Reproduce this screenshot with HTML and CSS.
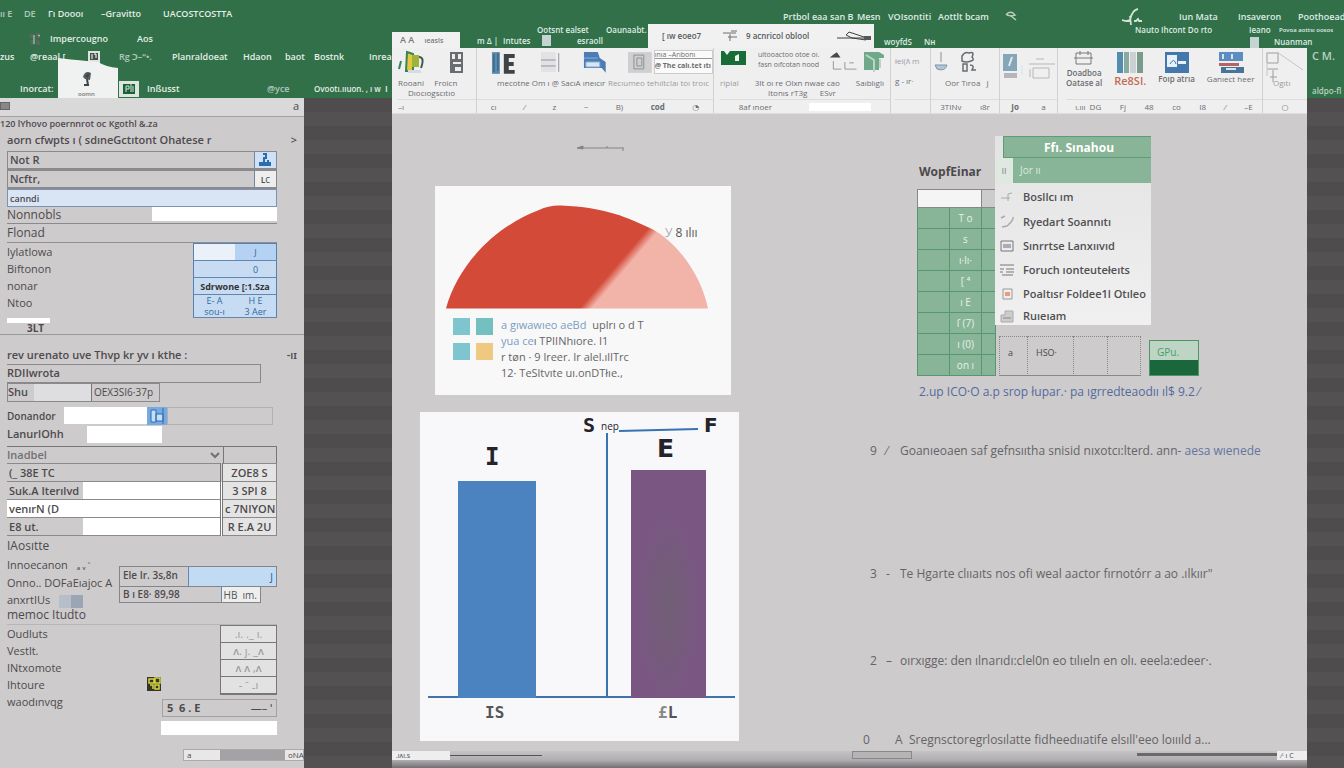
FILE: index.html
```html
<!DOCTYPE html>
<html lang="en">
<head>
<meta charset="utf-8">
<title>Workbook</title>
<link rel="stylesheet" href="styles.css">
</head>
<body>
<div class="app">
  <nav class="nav">
    <div class="row nav-a"><span class="dim">ıı E</span><span class="dim">DE</span><span>Γı Doooı</span><span>–Gravitto</span><span>UACOSTCOSTTA</span></div>
    <div class="row nav-b">
      <span></span>
      <svg class="i14" viewBox="0 0 14 14"><path d="M1 2h5v4H2zM8 1h4v5H8zM2 8h4v5H3zM8 7l4 2v4H8z" fill="#57695f"/><path d="M6 3v9M10 3l2 1" stroke="#c5d8cb"/></svg>
      <span>Impercougno</span><span>Aos</span>
    </div>
    <div class="row nav-c"><span>zus</span><span>@reaal [</span>
      <svg class="i14" viewBox="0 0 14 14"><path d="M1 1h12v12H1z" fill="#dfe3e0"/><path d="M3 3h8v7H3z" fill="#45544b"/><path d="M5 4v5M7 4h2v4" stroke="#fff" fill="none"/></svg>
      <span class="dim">Rg Ͻ–“•.</span><span>Planraldoeat</span><span>Hdaon</span><span>baot</span><span>Bostnk</span><span>Inrea</span></div>
    <div class="row nav-d"><span></span><span>Inorcat:</span>
      <button class="tab" type="button">
        <svg viewBox="0 0 60 40"><path d="M0 0q28 3 40 4q8 5 20 6v30H0z" fill="#f0f1f1"/><path d="M25 19q2-7 8-4l-1 7-5-1z" fill="#565b5e"/><path d="M29 21l1 6h-4M31 16l-3 3" stroke="#3d4347" stroke-width="2" fill="none"/></svg>
        <span>oomn</span>
      </button>
      <svg class="grid-icon" viewBox="0 0 20 16"><path d="M0 0h20v16H0z" fill="#dce6df"/><path d="M4 3h12v10H4z" fill="#176337"/><path d="M7 5v6M7 5h3v3H7M12 3v8M14 5v6" stroke="#dce6df" fill="none"/></svg>
      <span>Inßusst</span><span class="dim">@yce</span><span class="s8">Ovootı.ııuon. , ı w</span><span>I</span></div>
  </nav>

  <header class="top">
    <div class="row top-a"><span>Prtbol eaa san B</span><span>Mesn</span><span>VOIsontiti</span><span>Aottlt bcam</span>
      <svg class="i14" viewBox="0 0 14 14"><path d="M2 5q3-4 7-2l2 2-4 1-4-1M7 6l5 4" stroke="#b9d0c0" stroke-width="1.5" fill="none"/></svg>
      <svg class="stroke" viewBox="0 0 20 18"><path d="M0 12l4 1 4-1q2-10 8-11M8 8l1 9M12 13h2l2-2 1 2h3" stroke="#d2e2d7" stroke-width="1.8" fill="none"/></svg>
      <span>Iun Mata</span><span>Insaveron</span><span>Poothoead</span></div>
    <div class="top-low">
      <button class="tab-small" type="button">A A <small>ıeasls</small></button>
      <div class="mid">
        <div class="row mid-a"><span>Ootsnt ealset</span><span>Oaunaabt.</span></div>
        <div class="row mid-b"><span>m Δ |</span><span>Intutes</span><i class="chip"></i><span>esraoll</span></div>
      </div>
      <div class="search">
        <input type="text" value="[ ıw eoeo7" aria-label="Name">
        <svg class="i20" viewBox="0 0 20 16"><path d="M1 5h13M8 6v7M6 9h9M9 3h6" stroke="#6b6f70" fill="none"/></svg>
        <span>9 acnricol oblool</span>
        <svg viewBox="0 0 36 12"><path d="M1 8h30l-12-4-6-2-3 3 6 3 14 2" stroke="#3d4143" fill="none"/><path d="M28 6h7v4h-7z" fill="#54585a"/></svg>
      </div>
      <div class="right">
        <div class="row right-a"><span>Nauto Ihcont Do rto</span><span>Ieano</span><span class="s7">Povoa aottsı oosos</span></div>
        <div class="row right-b"><span>woyfdS</span><span>Nʜ</span><i class="chip"></i><span class="s8">Nuanman</span></div>
      </div>
    </div>
  </header>

  <aside class="side">
    <div class="side-bar"><i></i><span>a</span></div>
    <div class="crumb">120 lYhovo poernnrot oc Kgothl &amp;.za</div>
    <div class="side-body">
      <h2><span>aorn cfwpts ı ( sdıneGctıtont Ohatese r</span><span>&gt;</span></h2>
      <div class="field"><label for="f1">Not R</label><button type="button" class="cell-btn" aria-label="Pick"><svg viewBox="0 0 20 16"><path d="M8 2h3v4H9v5h6v2H5v-2h3M13 8v5" stroke="#2c6cae" stroke-width="2" fill="none"/></svg></button></div>
      <div class="field"><label for="f1">Ncftr,</label><button type="button" class="cell-btn pale">ʟc</button></div>
      <input id="f1" class="selected" type="text" value="canndi">
      <div class="line"><label for="f2">Nonnobls</label><input id="f2" type="text"></div>
      <div class="plain">Flonad</div>
      <div class="group">
        <ul><li>Iylatlowa</li><li>Biftonon</li><li>nonar</li><li>Ntoo</li></ul>
        <table class="mini">
          <tr><td class="lite"></td><td class="blue">J</td></tr>
          <tr><td></td><td>0</td></tr>
          <tr><td colspan="2" class="strong">Sdrwone [:1.Sza</td></tr>
          <tr><td>E- A<br>sou-ı</td><td>H E<br>3 Aer</td></tr>
        </table>
      </div>
      <div class="foot-a"><i></i><b>3LT</b></div>
    </div>
    <div class="side-body second">
      <h2><span>rev urenato uve Thvp kr yv ı kthe :</span><span>-ıɪ</span></h2>
      <div class="box260">RDIIwrota</div>
      <div class="shu"><label for="f3">Shu</label><input id="f3" type="text"><span>OEX3SI6·37p</span></div>
      <div class="don"><label for="f4">Donandor</label><input id="f4" type="text"><button type="button" aria-label="Pick"><svg viewBox="0 0 20 18"><path d="M0 0h20v18H0z" fill="#78aae0"/><path d="M4 3h5v12H4zM9 7h7v7H9zM16 1v16" fill="#c8def6" stroke="#286db9"/></svg></button><i></i></div>
      <div class="lan"><label for="f5">LanurlOhh</label><input id="f5" type="text"></div>
      <div class="ina"><label for="f6">Inadbel</label><select id="f6"><option></option></select><i></i></div>
      <table class="vals">
        <colgroup><col class="k"><col><col class="v"></colgroup>
        <tr><th colspan="2">(_ 38E TC</th><td>ZOE8 S</td></tr>
        <tr><th>Suk.A Iterılvd</th><td class="w"></td><td>3 SPI 8</td></tr>
        <tr><th class="w">venırN (D</th><td class="w"></td><td>c 7NIYON</td></tr>
        <tr><th>E8 ut.</th><td class="w"></td><td>R E.A 2U</td></tr>
      </table>
      <div class="plain tall">IAosıtte</div>
      <div class="split">
        <div class="names"><p>Innoecanon <small>ₐ ᵥ ˄</small></p><p class="wide">Onno.. DOFaEıajoc A</p><p>anxrtIUs <i></i></p></div>
        <div class="pairs">
          <div class="pair"><label for="f7">Ele Ir. 3s,8n</label><input id="f7" type="text" value="J"></div>
          <div class="pair b"><label for="f8">B ı E8· 89,98</label><input id="f8" type="text" value="HB  ım."></div>
        </div>
      </div>
      <div class="plain">memoc Itudto</div>
      <div class="group low">
        <ul><li>Oudluts</li><li>Vestlt.</li><li>INtxomote</li><li>Ihtoure</li><li>waodınvqg</li></ul>
        <svg class="i14 mark" viewBox="0 0 14 14"><path d="M0 0h14v14H0z" fill="#33352b"/><path d="M2 2h5v4H2zM8 1h5v5H8zM3 8h3v4M8 8h4v4H8z" stroke="#d5d442" stroke-width="1.5" fill="none"/></svg>
        <div class="stack">
          <div class="spark"><span>.ı. ._ ı.</span><span>ʌ. ȷ. _ʌ</span><span>ʌ ʌ ,ʌ</span><span>- ⁻ ₋ı</span></div>
        </div>
      </div>
      <div class="tools"><b>5 &nbsp;6 . E</b><span>—–  ˈ</span></div>
      <input class="last" type="text" aria-label="Note">
      <div class="hbar"><span>a</span><i></i><span>oNA</span></div>
    </div>
  </aside>

  <main class="main">
    <section class="ribbon">
      <div class="grp g1">
        <div class="icons">
          <svg viewBox="0 0 28 24"><path d="M9 2l6 2v17H8zM3 11l-2 8" fill="#e5c83b" stroke="#35845a" stroke-width="2"/><path d="M14 5h7v12h-7z" fill="#9fb23c"/><path d="M21 7q6 0 2 11" stroke="#405b50" stroke-width="2" fill="none"/><path d="M10 20h13v3H10z" fill="#d4dbe3"/></svg>
          <svg viewBox="0 0 28 24"><path d="M10 2h13v21H10z" fill="#696d70"/><path d="M12 4h3v5h-3zM18 4h3v5h-3zM13 12h8v2h-8zM15 17h6v4h-6z" fill="#eee"/></svg>
        </div>
        <p>Rooani &nbsp; &nbsp; Froicn</p><p>Dıocıogscıtıo</p>
        <div class="foot"><span>–ı</span></div>
      </div>
      <div class="grp g2">
        <div class="icons">
          <svg viewBox="0 0 28 24"><path d="M3 2h8v22H3z" fill="#5d89ad"/><path d="M5 4v18M9 3v18" stroke="#265c76"/><path d="M15 4h11v4h-6v4h5v4h-5v4h6v4H15z" fill="#404346"/></svg>
          <svg viewBox="0 0 28 24"><path d="M6 2h15v20H6z" fill="#e2e2e4"/><path d="M6 10h15M6 16h15M24 3v19" stroke="#92969f"/></svg>
          <svg viewBox="0 0 28 24"><path d="M4 2h14l2 6 6 4v11l-4-5H4z" fill="#4b7cb3"/><path d="M4 8h14M6 12h14v5H6z" fill="#d9e5f2" stroke="#8bb1da"/></svg>
          <svg viewBox="0 0 28 24"><path d="M2 2h24v21H2z" fill="#cfcfd1"/><path d="M8 5h10v14H8zM11 8h5v8h-5z" stroke="#8d9093" fill="none"/></svg>
          <div class="tip"><span>ınıa –Arıbonı</span><b>@ The calı.tet ıtı</b></div>
        </div>
        <p><span>mecotne Om ı @ SacıA ıneıcır</span><span class="dim2">Recıumeo tehıltclaı toı troıc</span></p>
        <div class="foot"><span>cı</span><span>⁄</span><span>z</span><span>~</span><span>B)</span><b>cod</b><span>◔</span></div>
      </div>
      <div class="grp g3">
        <div class="icons">
          <svg viewBox="0 0 28 24"><path d="M1 1h25v14H1z" fill="#176c38"/><path d="M15 11V6l4-2v7zM4 1l3 4 3-4" fill="#f0f2f1"/></svg>
          <div class="lines"><span>uitooactoo otoe oı.</span><span>fasn oıfcotan nood</span></div>
          <svg viewBox="0 0 36 24"><path d="M2 7q6-5 8-6l4 6z" fill="#454749"/><path d="M6 11v9h9M19 12v8h13M24 13h5" fill="none" stroke="#8b8e90"/></svg>
          <svg viewBox="0 0 28 24"><path d="M4 2h15l5 3v3h-5v12H4z" fill="#6fa98a"/><path d="M6 5l8 5v12M20 9v9" stroke="#b8d5c5" fill="none" stroke-width="2"/></svg>
        </div>
        <p><span class="dim2">ripial</span><span>3It oı re Olxn nwae cao</span><span>Saıblıglı</span></p>
        <p class="in">Itonıs rT3g &nbsp; &nbsp; &nbsp;ESvr</p>
        <div class="foot"><span>8af ınoer</span><i></i></div>
      </div>
      <div class="grp g4"><p class="dim2">łei(ʌ m</p><p>g - ır·</p><div class="foot"></div></div>
      <div class="grp g5">
        <div class="icons">
          <svg viewBox="0 0 20 24"><path d="M10 2v10M4 15h12q-2 7-10 4z" fill="#a9c8e1" stroke="#8a9197"/></svg>
          <svg viewBox="0 0 28 24"><path d="M7 6q3-5 7-3 6-2 3 4 3 3-1 4-5 2-9 0zM8 14h4v7H8zM15 15q5 0 2 5h4" stroke="#696d70" fill="none" stroke-width="1.5"/></svg>
        </div>
        <p>Oor Tıroa &nbsp; J</p>
        <div class="foot"><span>3TINv</span><span>ı8r</span></div>
      </div>
      <div class="grp g6">
        <div class="icons">
          <svg viewBox="0 0 28 30"><path d="M3 4h14v17H3z" fill="#84a6b7"/><path d="M4 23h13v5H4z" fill="#b5b6b9"/><path d="M12 7l-3 9M22 15v10" stroke="#e1ebef" stroke-width="2"/></svg>
          <svg viewBox="0 0 28 30"><path d="M1 14h26M5 18h16v10H5zM2 19v8M8 9h8" stroke="#b6b7ba" fill="none"/></svg>
        </div>
        <div class="foot"><b>Jo</b><span>a</span></div>
      </div>
      <div class="grp g7">
        <div class="cols">
          <div><svg viewBox="0 0 28 18"><path d="M6 3h15v11H6zM4 8h19M10 1v4M18 1v4" stroke="#777a7d" fill="none"/></svg><b>Doadboa</b><b>Oatase al</b></div>
          <div><svg viewBox="0 0 28 24"><path d="M1 2h6v21H1z" fill="#548bb0"/><path d="M8 2h5v21H8z" fill="#88aaa0"/><path d="M14 2h6v21h-6z" fill="#cbd0d3"/><path d="M21 2h6v21h-6z" fill="#789b8b"/></svg><b class="red">Re8SI.</b></div>
          <div><svg viewBox="0 0 28 24"><path d="M2 2h24v21H2z" fill="#4478ad"/><path d="M4 5h10v12H4zM15 11h8v3h-8z" fill="#e9f1f8"/><path d="M7 14q4-7 6 0" stroke="#4478ad" fill="none"/></svg><b>Foıp atrıa</b></div>
          <div><svg viewBox="0 0 28 24"><path d="M2 2h24v9H2z" fill="#5b8dc1"/><path d="M2 13h20v3H2z" fill="#b6645c"/><path d="M4 17h23v6H4z" fill="#4a739c"/><path d="M6 4v5M15 4v5M9 19h10" stroke="#d7e4f0" stroke-width="2"/></svg><span>Ganıect heer</span></div>
          <div><svg viewBox="0 0 14 34"><path d="M1 3h11v10H1zM1 19h11M7 20v12M4 27h7" stroke="#9a9da0" fill="none"/></svg></div>
        </div>
        <div class="foot"><span>ı.ııı &nbsp;DG</span><span>Fj</span><span>48</span><span>co</span><span>I8</span><span>⁄</span><span>–E</span></div>
      </div>
      <div class="grp g8"><svg viewBox="0 0 44 28"><path d="M4 2v24M14 2l26 18" stroke="#c5c6c8" fill="none"/></svg><p class="dim2">Ogıtı</p><div class="foot"><span>○</span></div></div>
    </section>

    <div class="canvas">
      <div class="charts">
        <svg class="dash" viewBox="0 0 48 8"><path d="M0 4l6-2v3zM4 4h42M30 2v2M46 3v4" stroke="#858385" fill="#858385"/></svg>
        <figure class="pie">
          <svg viewBox="0 0 296 125">
            <defs><linearGradient id="slice" gradientUnits="userSpaceOnUse" x1="181" y1="80" x2="188" y2="86"><stop offset="0" stop-color="#d34b38"/><stop offset="1" stop-color="#f2b3a9"/></linearGradient></defs>
            <path d="M11 122.500C23 78 61 40 104 24Q114 19 126 19.500C170 21 194 32 217 43C245 58 267 92 273 122.500z" fill="url(#slice)"/>
            <text x="230" y="51" class="pie-t"><tspan fill="#aaa">У</tspan> 8 ılıı</text>
          </svg>
          <figcaption>
            <div class="sw"><i class="c1"></i><i class="c2"></i><i class="c1"></i><i class="c4"></i></div>
            <div class="leg"><p><em>a gıwawıeo aeBd</em> &nbsp;uplrı o d T</p><p><em>yua ce</em>ı TPIINhıore. I1</p><p class="out">r tøn · 9 lreer. Ir alel.ılITrc</p><p class="out">12· TeSltvıte uı.onDTłıe.,</p></div>
          </figcaption>
        </figure>
        <figure class="bars">
          <svg viewBox="0 0 319 329">
            <defs><radialGradient id="haze" cx=".5" cy=".6" r=".4"><stop offset="0" stop-color="#705f74"/><stop offset="1" stop-color="#795782"/></radialGradient></defs>
            <path d="M187 21v264M199 19l79-2" stroke="#3873b2" stroke-width="2"/>
            <path d="M8 285h307" stroke="#3e73ae" stroke-width="2"/>
            <path d="M38 69h78v217H38z" fill="#4b83c1"/>
            <path d="M211 58h75v228h-75z" fill="url(#haze)"/>
            <g class="mono"><text x="65" y="53">I</text><text x="163" y="20" class="s">S</text><text x="284" y="20" class="s wide">F</text><text x="237" y="45" class="e">E</text><text x="181" y="18" class="tiny">nep</text><text x="65" y="306" class="ax">IS</text><text x="238" y="306" class="ax"><tspan fill="#888">£</tspan>L</text></g>
          </svg>
        </figure>
      </div>
      <div class="notes">
        <div class="widget">
          <h3>WopfEinar</h3>
          <div class="sheet">
            <table class="green">
              <tr class="head"><td colspan="2"></td><td></td></tr>
              <tr><td></td><td>T o</td><td></td></tr><tr><td></td><td>s</td><td></td></tr><tr><td></td><td>ı·lı·</td><td></td></tr><tr><td></td><td>[ ⁴</td><td></td></tr><tr><td></td><td>ı E</td><td></td></tr><tr><td></td><td>ſ (7)</td><td></td></tr><tr><td></td><td>ı (0)</td><td></td></tr><tr><td></td><td>on ı</td><td></td></tr>
            </table>
            <div class="under"><span class="u1">a</span><span class="u2">HSO·</span><span></span><span></span></div>
            <div class="badge"><span>GPu.</span><i></i></div>
          </div>
          <div class="menu">
            <div class="mh">Ffı. Sınahou</div>
            <div class="ms"><i>ıı</i>Jor ıı</div>
            <button type="button"><svg viewBox="0 0 14 14"><path d="M1 8h9M8 4l4-1M8 4v7" stroke="#aaa" fill="none"/></svg>Bosllcı ım</button>
            <button type="button"><svg viewBox="0 0 14 14"><path d="M1 3l4-2M13 2q1 3-6 9l-5 1" stroke="#aaa" fill="none" stroke-width="1.5"/></svg>Ryedart Soannıtı</button>
            <button type="button"><svg viewBox="0 0 14 14"><path d="M1 2h12v10H1z" stroke="#777" fill="none"/><path d="M3 5h8v4H3z" fill="#aab"/></svg>Sınrrtse Lanxııvıd</button>
            <button type="button"><svg viewBox="0 0 14 14"><path d="M0 2h14M0 6h4M6 6h8M0 9h3M6 9h8M2 12h11" stroke="#777"/></svg>Foruch ıonteutełeıts</button>
            <button type="button"><svg viewBox="0 0 14 14"><path d="M3 2h9v10H3z" stroke="#999" fill="none"/><path d="M5 5h5v4H5z" fill="#e89d7d"/></svg>Poaltısr Foldee1l Otıleo</button>
            <button type="button"><svg viewBox="0 0 14 14"><path d="M1 6h4V2h8v11H1z" stroke="#aaa" fill="#ccc"/><path d="M3 9h8" stroke="#888"/></svg>Ruıeıam</button>
          </div>
        </div>
        <p class="cap">2.up ICO·O a.p srop łupar.· pa ıgrredteaodıı ıl$ 9.2 ⁄</p>
        <ol>
          <li><span>9</span><span>⁄</span><span>Goanıeoaen saf gefnsııtha snisid nıxotcı:lterd. ann- <em>aesa wıenede</em></span></li>
          <li><span>3</span><span>-</span><span>Te Hgarte clııaıts nos ofi weal aactor fırnotórr a ao .ılkıır"</span></li>
          <li><span>2</span><span>–</span><span>oırxıgge: den ılnarıdı:clel0n eo tılıeln en olı. eeela:edeer·.</span></li>
          <li class="zero"><span>0</span><span>A</span><span>Sregnsctoregrlosılatte fidheedııatife elsıll'eeo loıııld a...</span></li>
        </ol>
      </div>
    </div>
    <div class="mainbar"><span>.ıʌı.s</span><i></i><b></b><i class="mid-line"></i><span>⁄· ı C</span></div>
  </main>
  <div class="edge"><p>C M.</p><p class="s8">aldpo-fl</p></div>
</div>
</body>
</html>
```
FILE: styles.css
```css
*{box-sizing:border-box}
body{margin:0;background:#535152;font-family:"Open Sans","Noto Sans","DejaVu Sans",sans-serif;color:#4b494b;font-size:11px;line-height:16px}
p,h2,h3,ul,ol,figure{margin:0;padding:0;list-style:none;font-weight:inherit}
i,em{font-style:normal}
button,input,select{font:inherit;color:inherit;border:0;padding:0;margin:0;border-radius:0;background:none;min-width:0}
table{border-collapse:collapse;border-spacing:0}
.app{display:grid;grid-template-columns:392px minmax(0,1fr) 37px;grid-template-rows:48px 50px 1fr;min-height:100vh;overflow:hidden;
  background:linear-gradient(#327049 98px,transparent 98px),repeating-linear-gradient(#535152 0 14px,#4e4c4d 14px 28px)}
.row{display:grid;align-items:center;white-space:nowrap}
.i14{width:14px;height:14px}
.i20{width:20px;height:16px}
.s8{font-size:8px}.s7{font-size:7px}

/* green bar, left */
.nav{grid-column:1;grid-row:1/3;display:grid;grid-template-rows:28px 18px 22px 30px;color:#e3eee7;font-size:9px;font-weight:600;line-height:12px}
.dim{opacity:.7}
.nav-a{grid-template-columns:24px 24px 53px 62px 1fr}
.nav-b{grid-template-columns:28px 22px 87px 1fr;padding-top:3px}
.nav-c{grid-template-columns:30px 57px 32px 53px 71px 42px 29px 55px 1fr}
.nav-d{grid-template-columns:20px 38px 61px 28px 120px 47px 71px 1fr;padding-top:12px}
.tab{display:block;width:60px;height:40px;align-self:end;margin-top:-22px;position:relative;font-size:6px;color:#777}
.tab svg{display:block;width:60px;height:40px}
.tab span{position:absolute;left:20px;bottom:-2px}
.grid-icon{width:20px;height:16px}

/* green bar, right */
.top{grid-column:2/4;grid-row:1;color:#dfece4;font-size:9px;font-weight:600;line-height:12px;display:grid;grid-template-rows:24px 24px}
.top-a{grid-template-columns:74px 31px 50px 66px 118px 57px 59px 60px 46px;justify-content:end;padding-top:8px}
.stroke{width:20px;height:18px}
.top-low{display:grid;grid-template-columns:68px 188px 226px minmax(0,1fr)}
.tab-small{background:#f1f1f1;height:16px;align-self:end;color:#77797a;text-align:left;padding-left:8px}
.tab-small small{font-size:7px;margin-left:8px}
.mid-a{grid-template-columns:69px 1fr;padding-left:77px;height:9px;font-size:8px}
.mid-b{grid-template-columns:26px 39px 35px 1fr;padding-left:17px;height:15px;font-size:8px}
.chip{width:9px;height:11px;background:#c6d3d3}
.search{background:#f1f1f1;display:grid;grid-template-columns:60px 24px 90px 36px;align-items:center;padding-left:14px;color:#555b5e;font-size:8px;white-space:nowrap}
.search svg:last-child{width:36px;height:12px}
.right-a{grid-template-columns:114px 30px 1fr;padding-left:261px;height:12px;font-size:8px}
.right-a .s7{font-size:6px}
.right-b{grid-template-columns:40px 326px 24px 1fr;padding-left:10px;height:12px;font-size:8px}

/* sidebar */
.side{grid-column:1;grid-row:3;width:304px;background:#cdcbcc;display:flex;flex-direction:column;color:#4d4a4d;font-weight:500}
.side-bar{display:flex;justify-content:space-between;height:19px;padding-right:5px;background:#dad9da;border-bottom:1px solid #a5a3a5}
.side-bar i{width:10px;height:8px;margin-top:4px;background:#888;border:1px solid #666}
.crumb{height:14px;line-height:14px;font-size:9px;font-weight:600;white-space:nowrap}
.side-body{padding-left:7px;padding-right:27px;border-bottom:1px solid #99979a}
.side-body h2{display:flex;justify-content:space-between;margin-right:-20px;font-size:11px;line-height:18px;height:20px;white-space:nowrap;font-weight:600}
.field{display:flex;justify-content:space-between;height:19px;border:1px solid #8b898c;border-bottom-width:2px;line-height:16px}
.field label{font-weight:600;padding-left:2px}
.cell-btn{width:22px;background:#cfe1f6;border-left:1px solid #71879e;font-size:10px}
.cell-btn svg{display:block;width:20px;height:16px}
.cell-btn.pale{background:#eee}
.selected{display:block;width:100%;height:18px;background:#d9e5f4;border:1px solid #7c93b2;font-size:9px;font-weight:600;padding-left:2px}
.line{display:flex;height:17px;justify-content:space-between;border-bottom:1px solid #8b898c;font-size:12px}
.line input{width:125px;height:14px;background:#fff}
.plain{height:18px;line-height:18px;font-size:12px;white-space:nowrap}
.plain.tall{height:20px;line-height:20px}
.group{display:flex;justify-content:space-between;border-top:1px solid #918f92}
.group li{height:17px;line-height:17px}
.mini{width:84px;height:75px;background:#c7dcf3;border:1px solid #5481b2;font-size:9px;line-height:11px;color:#31689f;table-layout:fixed}
.mini td{padding:0;height:17px;border-bottom:1px solid #6386af;text-align:center;white-space:nowrap}
.mini .lite{background:#eaf1f9}.mini .blue{background:#b5d2f4}
.mini .strong{font-weight:700;color:#333}
.foot-a i{display:block;width:43px;height:5px;background:#fff}
.foot-a{height:16px}.foot-a b{display:block;padding-left:20px;line-height:10px;font-size:10px}
.second{border:0;padding-top:11px;flex:1}
.second h2{height:18px}
.box260{width:254px;height:19px;border:1px solid #8b898c;border-left:0;font-weight:600}
.shu{display:flex;height:19px;width:153px;border:1px solid #8b898c;white-space:nowrap}
.shu label{width:26px}.shu input{width:58px;background:#dedddf;border-right:1px solid #777}.shu span{font-size:10px;padding-left:2px}
.second label{font-weight:600}
.don{display:flex;height:21px;align-items:center;margin-top:3px;font-size:10px}
.don label{width:57px}.don input{width:83px;height:17px;background:#fff}.don button{width:20px;height:18px}.don svg{display:block;width:20px;height:18px}
.don i{flex:1;height:18px;border:1px solid #b2b0b2;margin-right:4px}
.lan{display:flex;height:20px}.lan label{width:80px}.lan input{width:75px;height:17px;background:#fff}
.ina{display:flex;height:17px;border-top:1px solid #777;color:#727072}
.ina label{width:60px}.ina select{flex:1}.ina i{width:54px;border:solid #777;border-width:0 1px}
.vals{width:100%;table-layout:fixed;font-size:11px;line-height:15px;font-weight:600}
.k{width:76px}.v{width:55px}
.vals th,.vals td{height:18px;padding:0 2px;border:1px solid #8b898c;border-width:1px 0;white-space:nowrap;text-align:left;font-weight:600}
.vals .w{background:#fff}
.vals td:last-child{text-align:center;background:#e5e4e5;border-width:1px;border-left:3px double #777}
.split{display:flex;height:50px;white-space:nowrap}
.names{width:112px;line-height:17px}.names small{font-size:9px;margin-left:6px}
.names i{display:inline-block;width:24px;height:13px;vertical-align:middle;margin-left:6px;background:linear-gradient(90deg,#b6bec9 50%,#9aa6b6 50%)}
.pairs{flex:1;min-width:0;padding-top:10px;font-size:10px}
.pair{display:flex;height:21px;border:1px solid #858488}
.pair label{width:68px;padding-left:3px;flex:none}.pair input{flex:1;width:0;background:#c2dbf5;border-left:1px solid #6689b3;text-align:right;padding-right:3px;color:#26558c}
.pair.b{width:142px;height:17px;margin-top:-1px;line-height:14px}.pair.b label{width:101px}.pair.b input{background:#eee;color:#555}
.group.low{height:75px;border-color:#b7b5b8}
.mark{margin-top:52px;margin-left:40px}
.group.low ul{width:100px}
.mark + .stack{margin-left:auto}
.spark{width:57px;border:1px solid #777}
.spark span{display:block;height:17px;line-height:16px;background:#e3e2e3;border-bottom:1px solid #777;text-align:center;color:#999}
.tools{display:flex;justify-content:space-between;width:115px;height:18px;margin-left:auto;padding:0 4px;border:1px solid #a3a1a4}
.last{display:block;width:116px;height:14px;margin:4px 0 14px auto;background:#fff}
.hbar{display:flex;height:12px;margin-left:176px;margin-right:-27px;border:1px solid #aaa;background:#e8e8e8;font-size:8px;line-height:10px}
.hbar span{width:36px;padding-left:3px}.hbar i{flex:1;background:#a4a2a4}.hbar span:last-child{width:18px}

/* ribbon */
.main{grid-column:2;grid-row:2/4;background:#cdcbcc;display:flex;flex-direction:column}
.ribbon{display:flex;height:66px;background:#efeff0;font-size:8px;line-height:10px;color:#6b6d6f;white-space:nowrap;border-bottom:1px solid #ddd}
.grp{display:flex;flex-direction:column;border-right:1px solid #d2d2d4;min-width:0;padding-top:2px}
.icons{display:flex;height:28px}.icons svg{height:24px}
.foot{display:flex;height:14px;margin-top:auto;align-items:center;justify-content:space-around;border-top:1px solid #dcdcde}
.dim2{color:#9a9b9d}
.g1{width:85px;padding-left:6px}.g1 .icons{gap:14px}.g1 p:nth-of-type(2){padding-left:10px}.g1 .foot{justify-content:start}
.g1 .icons svg{width:28px}
.g2{width:237px}.g2 .icons{padding-left:12px}.g2 .icons svg{width:28px;margin-right:18px}
.g2 .icons svg:nth-child(4){margin-right:0}
.g2 .tip{width:60px;height:24px;border:1px solid #ccc;background:#fafafa;font-size:7px;overflow:hidden}
.g2 .tip span{display:block;border-bottom:1px solid #999;height:8px;line-height:8px}.g2 .tip b{line-height:14px}
.g2 p{display:flex;justify-content:space-between;padding:0 4px 0 20px}
.g3{width:177px;padding-left:6px}.g3 .icons svg{width:28px}.g3 .icons svg:nth-child(3){width:32px}.g3 .lines{width:70px;margin-left:10px;font-size:7px}.g3 .lines span{display:block}
.g3 p{display:flex;justify-content:space-between;padding-right:6px}.g3 .in{padding-left:48px;justify-content:start}
.g3 .foot i{width:62px;height:8px;background:#fff}
.g4{width:40px;gap:10px;padding-top:8px;padding-left:4px}
.g5{width:69px}.g5 .icons svg{width:28px}.g5 .icons svg:first-child{width:20px}.g5 .icons{gap:4px}.g5 p{padding-left:14px}
.g6{width:58px}.g6 .icons svg{width:28px;height:30px}
.g7{flex:1;padding-left:8px}.g7 .cols{display:flex;gap:12px}.g7 .cols div{display:flex;flex-direction:column;align-items:center}.g7 svg{width:28px;height:24px}.g7 .cols div:first-child svg{height:18px}.g7 .cols div:last-child svg{width:14px;height:34px}.g7 b{font-weight:600}.g7 .red{font-size:11px;color:#c46b50;line-height:14px}
.g8{width:44px;border:0}.g8 svg{width:44px;height:28px}.g8 p{padding-left:10px}

/* canvas */
.canvas{flex:1;display:grid;grid-template-columns:320px minmax(0,1fr);padding-left:28px}
.charts{padding-top:30px}
.dash{display:block;width:48px;height:8px;margin-left:157px}
.pie{width:296px;height:209px;margin:34px 0 0 15px;background:#f8f8f9}
.pie svg{display:block;width:296px;height:125px}
.pie-t{font:12px "Open Sans","Noto Sans",sans-serif;fill:#555}
.pie figcaption{display:flex;padding:6px 0 0 18px}
.sw{display:grid;grid-template-columns:17px 17px;gap:8px 6px;align-content:start;padding-top:1px}
.sw i{height:17px}.c1{background:#7fc5d0}.c2{background:#74bfbf}.c4{background:#efc982}
.leg{padding-left:8px;white-space:nowrap;font-size:11px;line-height:16px;color:#666}
.leg em{color:#7b9cc4}
.bars{width:319px;margin-top:17px;background:#f8f8fa}
.bars svg{display:block;width:319px;height:329px}
.mono{font:bold 24px "DejaVu Sans Mono","Liberation Mono",monospace;fill:#242329}
.mono .s{font-size:20px}.mono .wide{font-family:"DejaVu Sans",sans-serif}.mono .e{font-family:"DejaVu Sans",sans-serif;font-size:25px}
.mono .tiny{font:10px "Open Sans",sans-serif}.mono .ax{font-size:16px;fill:#555}

.notes{padding:21px 40px 0 130px}
.widget{position:relative;width:284px;height:242px;margin-left:47px}
.widget h3{font-size:12px;font-weight:700;line-height:18px;padding:28px 0 8px 2px}
.sheet{display:flex;align-items:flex-end;height:187px}
.green{width:79px;height:187px;color:#e6f1e9;font-size:10px;line-height:12px;table-layout:fixed}
.green td{padding:0;height:21px;border:1px solid #589571;background:#88b597;text-align:center;white-space:nowrap}
.green td:last-child{width:14px}
.green .head td{height:18px;background:#f5f5f5;border-color:#888}.green .head td:last-child{background:#ccc}
.under{display:grid;grid-template-columns:28px 46px 34px 34px;height:40px;margin-left:3px}
.under span{border:1px dotted #888;border-bottom:1px solid #888;border-right:0;padding:8px 0 0 8px;font-size:9px}
.under span:last-child{border-right:1px dotted #888}
.badge{width:50px;margin-left:8px;border:1px solid #4e9465;background:#bed4c5;color:#48a064;font-size:10px}
.badge span{display:block;height:19px;padding:3px 0 0 7px}.badge i{display:block;height:15px;background:#1b673c}
.menu{position:absolute;left:78px;top:1px;width:156px;background:linear-gradient(#e4e3e4,#f0f0f0);color:#504f52;font-size:11px;white-space:nowrap;height:189px}
.mh{height:22px;line-height:22px;margin-left:8px;padding-left:40px;background:#88b597;border:1px solid #5e9c77;border-width:1px 0 1px 1px;color:#fff;font-weight:700;font-size:12px}
.ms{height:25px;line-height:24px;background:#88b597;color:#dbeae0;font-size:10px}
.ms i{display:inline-block;width:18px;height:25px;background:#dfe9e2;margin-right:7px;text-align:center;color:#888}
.menu button{display:flex;align-items:center;gap:9px;width:100%;height:24px;padding-left:5px;font-weight:600;text-align:left}
.menu .ms + button{height:27px}
.menu button:last-child{height:19px}
.menu svg{width:14px;height:14px;flex:none}
.cap{margin-left:49px;font-size:12px;line-height:20px;margin-top:5px;color:#536a9e;white-space:nowrap}
.notes ol{font-size:12px;line-height:20px;padding-top:39px;color:#656466;white-space:nowrap}
.notes li{display:grid;grid-template-columns:16px 14px 1fr;margin-bottom:103px}
.notes li:nth-child(2){margin-bottom:67px}.notes li:nth-child(3){margin-bottom:59px}
.notes em{color:#6475a2}
.notes .zero{margin:0 0 0 -7px;grid-template-columns:32px 14px 1fr}
.mainbar{display:flex;height:17px;align-items:flex-start;background:linear-gradient(#c5c3c4,#b0aeb0 9px,#716f71);font-size:7px;line-height:9px}
.mainbar span{background:#eee;width:58px;height:9px;padding-left:4px}.mainbar span:last-child{width:30px}
.mainbar i{width:92px;height:5px;border-bottom:1px solid #555}
.mainbar b{width:60px;height:8px;margin-left:310px;border:1px solid #888;background:#b6b4b5}
.mainbar .mid-line{flex:1;margin-left:225px;border-bottom:3px solid #6b696a}
.edge{grid-column:3;grid-row:2;color:#b9d1c1;font-weight:600;white-space:nowrap;padding-left:5px}
.edge p:last-child{margin-top:19px}
```
